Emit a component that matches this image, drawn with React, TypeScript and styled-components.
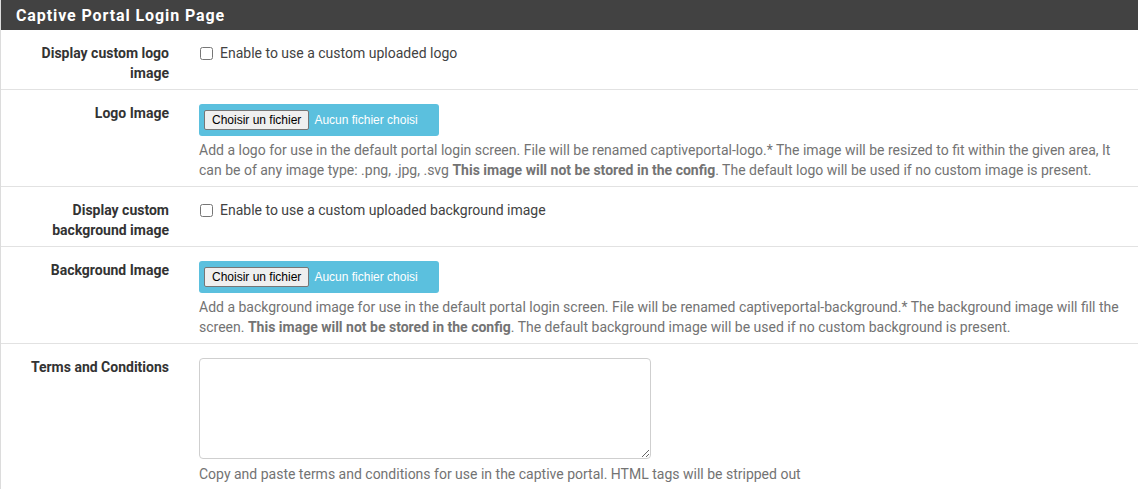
import React from "react";
import styled, { createGlobalStyle } from "styled-components";

const GlobalStyle = createGlobalStyle`
  body {
    margin: 0;
    background: #fff;
    font-family: Roboto, "Liberation Sans", Arial, sans-serif;
    font-size: 14px;
    color: #212121;
  }
`;

const Panel = styled.div`
  border-left: 1px solid #dcdcdc;
  background: #fff;
`;

const Heading = styled.div`
  background: #424242;
  color: #fff;
  height: 30px;
  display: flex;
  align-items: center;
  padding-left: 15px;
  font-size: 16px;
  font-weight: 700;
  letter-spacing: 0.9px;
`;

const Row = styled.div`
  display: flex;
  padding: 13px 0 6px;
  border-bottom: 1px solid #e2e2e2;
  &:last-child {
    border-bottom: none;
  }
`;

const Label = styled.div`
  width: 168px;
  flex: none;
  text-align: right;
  font-weight: 700;
  line-height: 20px;
  color: #333;
`;

const Field = styled.div`
  flex: 1;
  padding: 0 15px 0 30px;
  line-height: 20px;
  color: #333;
`;

const CheckLine = styled.label`
  display: flex;
  align-items: center;
  height: 20px;
  color: #424242;
`;

const Check = styled.input`
  width: 13px;
  height: 13px;
  margin: 0 7px 0 1px;
`;

const FileBox = styled.div`
  width: 240px;
  height: 32px;
  box-sizing: border-box;
  margin-top: 1px;
  padding: 0 5px;
  background: #5bc0de;
  border-radius: 3px;
  display: flex;
  align-items: center;
  gap: 5px;
  font-family: "Liberation Sans", Arial, sans-serif;
`;

const FileButton = styled.button`
  height: 20px;
  box-sizing: border-box;
  padding: 0 7px;
  font-family: "Liberation Sans", Arial, sans-serif;
  font-size: 12px;
  color: #000;
  background: #efefef;
  border: 1px solid #767676;
  border-radius: 2px;
`;

const FileName = styled.span`
  color: #fff;
  font-size: 12px;
`;

const Help = styled.div<{ $gap?: number }>`
  margin-top: ${(p) => p.$gap ?? 4}px;
  color: #737373;
`;

const TextArea = styled.textarea`
  display: block;
  width: 452px;
  height: 101px;
  box-sizing: border-box;
  margin-top: 1px;
  border: 1px solid #cfcfcf;
  border-radius: 4px;
  resize: vertical;
`;

const FileInput: React.FC = () => (
  <FileBox>
    <FileButton type="button">Choisir un fichier</FileButton>
    <FileName>Aucun fichier choisi</FileName>
  </FileBox>
);

const App: React.FC = () => (
  <>
    <GlobalStyle />
    <Panel>
      <Heading>Captive Portal Login Page</Heading>
      <Row>
        <Label>
          Display custom logo
          <br />
          image
        </Label>
        <Field>
          <CheckLine>
            <Check type="checkbox" />
            Enable to use a custom uploaded logo
          </CheckLine>
        </Field>
      </Row>
      <Row>
        <Label>Logo Image</Label>
        <Field>
          <FileInput />
          <Help>
            Add a logo for use in the default portal login screen. File will be
            renamed captiveportal-logo.* The image will be resized to fit within
            the given area, It can be of any image type: .png, .jpg, .svg{" "}
            <b>This image will not be stored in the config</b>. The default logo
            will be used if no custom image is present.
          </Help>
        </Field>
      </Row>
      <Row>
        <Label>
          Display custom
          <br />
          background image
        </Label>
        <Field>
          <CheckLine>
            <Check type="checkbox" />
            Enable to use a custom uploaded background image
          </CheckLine>
        </Field>
      </Row>
      <Row>
        <Label>Background Image</Label>
        <Field>
          <FileInput />
          <Help>
            Add a background image for use in the default portal login screen.
            File will be renamed captiveportal-background.* The background image
            will fill the screen. <b>This image will not be stored in the config</b>
            . The default background image will be used if no custom background
            is present.
          </Help>
        </Field>
      </Row>
      <Row>
        <Label>Terms and Conditions</Label>
        <Field>
          <TextArea />
          <Help $gap={5}>
            Copy and paste terms and conditions for use in the captive portal.
            HTML tags will be stripped out
          </Help>
        </Field>
      </Row>
    </Panel>
  </>
);

export default App;
